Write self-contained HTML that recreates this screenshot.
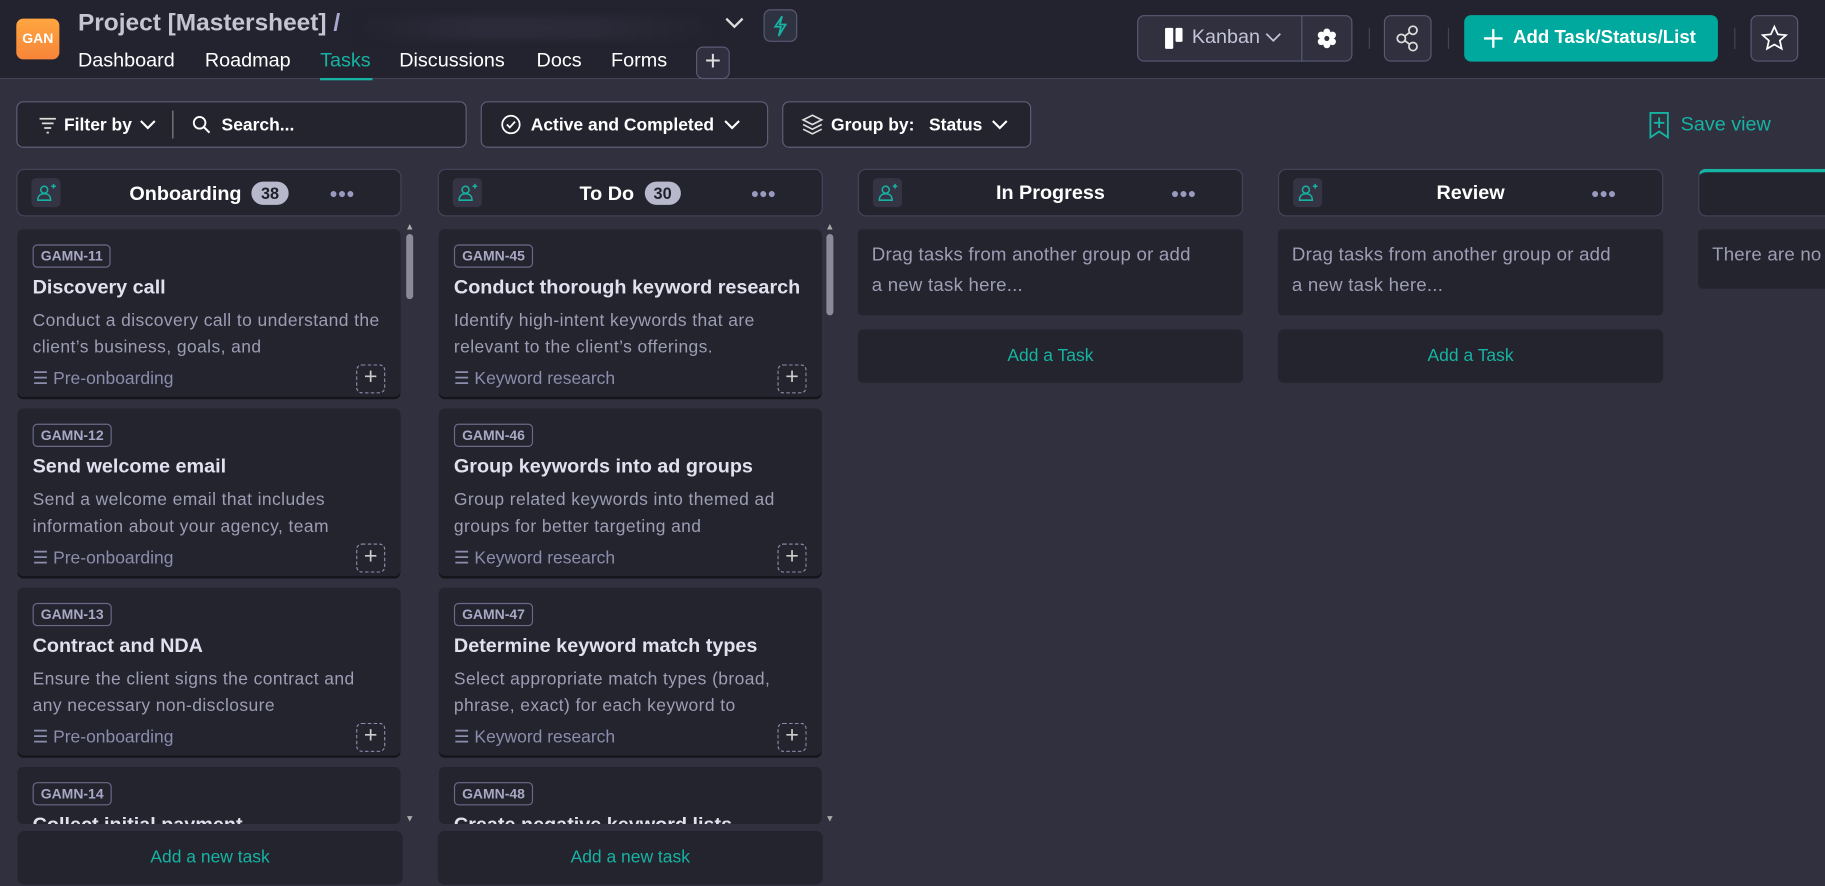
<!DOCTYPE html>
<html><head><meta charset="utf-8"><style>
*{box-sizing:border-box;margin:0;padding:0}
html,body{width:1825px;height:886px;overflow:hidden;background:#30303f}
#w{transform:scale(1.16390);transform-origin:0 0;width:1568px;height:761px;position:absolute;left:0;top:0;font-family:"Liberation Sans",sans-serif;color:#fff;background:#30303f;overflow:hidden}
.a{position:absolute}
.top{left:0;top:0;width:1568px;height:68px;background:#23232f;border-bottom:1px solid #444457}
.btn{position:absolute;border:1px solid #5a5a75;border-radius:6px;background:#2f2f40}
.tab{position:absolute;top:42px;font-size:17px;color:#fff}
.tb{position:absolute;top:87px;height:40px;border:1px solid #5e5e78;border-radius:6px;background:#24242f;font-size:15px;font-weight:bold;display:flex;align-items:center}
.col{position:absolute;top:145px;width:331px}
.hdr{height:41px;border:1px solid #45455a;border-radius:7px;background:#24242f;position:relative}
.hdr .ic{position:absolute;left:12px;top:7px;width:25px;height:25px;border-radius:4px;background:#343444}
.hdr .t{position:absolute;left:0;right:0;top:10px;text-align:center;font-size:17px;font-weight:bold}
.cnt{display:inline-block;background:#b8b8cc;color:#1f1f2a;border-radius:10px;font-size:14px;padding:2px 8px;margin-left:4px;vertical-align:1px}
.dots{position:absolute;left:268px;top:13px;color:#9a9ac0;font-size:12px;letter-spacing:0px}
.card{position:absolute;left:1px;width:329px;height:144px;background:#24242f;border-radius:5px;box-shadow:0 2px 0 #14141a}
.tag{position:absolute;left:13px;top:13px;border:1px solid #6a6a88;border-radius:4px;font-size:12px;font-weight:bold;color:#a8a8c4;padding:2px 6px}
.ti{position:absolute;left:13px;top:40px;font-size:17px;font-weight:bold;color:#e0e0ee}
.ds{position:absolute;left:13px;top:67px;width:300px;font-size:15px;letter-spacing:0.35px;line-height:23px;color:#9d9db4;height:46px;overflow:hidden}
.ft{position:absolute;left:13px;top:119px;font-size:15px;color:#8c8cac}
.pl{position:absolute;left:291px;top:116px;width:25px;height:25px;border:1px dashed #8c8cac;border-radius:5px;color:#ccc;text-align:center;font-size:20px;line-height:21px}
.add{position:absolute;top:714px;width:331px;height:46px;background:#24242f;border-radius:6px;color:#16b3a2;font-size:15px;text-align:center;line-height:46px}
.empty{position:absolute;top:52px;width:331px;height:74px;background:#24242f;border-radius:4px;color:#9d9db4;font-size:16px;line-height:26px;padding:10px 12px 0 12px;letter-spacing:0.2px}
.at{position:absolute;top:138px;width:331px;height:46px;background:#24242f;border-radius:5px;color:#16b3a2;font-size:15px;text-align:center;line-height:46px}
.sb{position:absolute;width:8px;top:190px;height:518px}
</style></head><body><div id="w">
<div class="a top"></div>
<div class="a" style="left:14px;top:16px;width:37px;height:35px;border-radius:6px;background:linear-gradient(#ffa640,#f7853a);font-size:12px;font-weight:bold;text-align:center;line-height:35px">GAN</div>
<div class="a" style="left:67px;top:8px;font-size:21px;font-weight:bold;color:#c4c4d2">Project [Mastersheet] <span style="color:#a8a8d0">/</span></div>
<div class="a" style="left:310px;top:14px;width:300px;height:20px;background:linear-gradient(90deg,#23232f,#2b2b3a,#2a2a38,#23232f);filter:blur(3px)"></div>
<svg class="a" style="left:622px;top:13px" width="18" height="14"><path d="M2 3l7 7 7-7" stroke="#ddd" stroke-width="2" fill="none"/></svg>
<div class="btn" style="left:656px;top:8px;width:29px;height:28px;background:#2f3240"><svg width="27" height="26"><path d="M15 5l-6 9h5l-2 8 6-10h-5z" stroke="#16b3a2" stroke-width="1.5" fill="none"/></svg></div>
<div class="tab" style="left:67px">Dashboard</div>
<div class="tab" style="left:176px">Roadmap</div>
<div class="tab" style="left:275px;color:#16b3a2">Tasks</div>
<div class="a" style="left:275px;top:67px;width:45px;height:2px;background:#16b3a2"></div>
<div class="tab" style="left:343px">Discussions</div>
<div class="tab" style="left:461px">Docs</div>
<div class="tab" style="left:525px">Forms</div>
<div class="btn" style="left:598px;top:40px;width:29px;height:28px;text-align:center;font-size:24px;line-height:24px;color:#ddd">+</div>

<div class="btn" style="left:977px;top:13px;width:185px;height:40px;background:#30303f"></div>
<div class="a" style="left:1118px;top:13px;width:1px;height:40px;background:#5a5a75"></div>
<div class="a" style="left:1001px;top:24px;width:7px;height:18px;background:#fff;border-radius:1px"></div>
<div class="a" style="left:1010px;top:24px;width:6px;height:12px;background:#fff;border-radius:1px"></div>
<div class="a" style="left:1024px;top:22px;font-size:17px;color:#c4c4d8">Kanban</div>
<svg class="a" style="left:1086px;top:27px" width="16" height="10"><path d="M2 2l6 6 6-6" stroke="#c4c4d8" stroke-width="1.5" fill="none"/></svg>
<svg class="a" style="left:1130px;top:23px" width="20" height="20"><g fill="#fff"><circle cx="10" cy="4.5" r="3"/><circle cx="10" cy="15.5" r="3"/><circle cx="5.2" cy="7.2" r="3"/><circle cx="14.8" cy="7.2" r="3"/><circle cx="5.2" cy="12.8" r="3"/><circle cx="14.8" cy="12.8" r="3"/><circle cx="10" cy="10" r="5"/></g><circle cx="10" cy="10" r="2.2" fill="#30303f"/></svg>
<div class="a" style="left:1176px;top:24px;width:1px;height:18px;background:#444457"></div>
<div class="btn" style="left:1189px;top:13px;width:41px;height:40px;background:#30303f"><svg width="39" height="38"><g stroke="#ddd" stroke-width="1.5" fill="none"><circle cx="14" cy="19" r="3.5"/><circle cx="24" cy="12" r="3.5"/><circle cx="24" cy="26" r="3.5"/><path d="M17 17l4-3M17 21l4 3"/></g></svg></div>
<div class="a" style="left:1244px;top:24px;width:1px;height:18px;background:#444457"></div>
<div class="a" style="left:1258px;top:13px;width:218px;height:40px;background:#00a99d;border-radius:6px;font-size:16px;font-weight:bold;line-height:40px;padding-left:42px">Add Task/Status/List</div>
<svg class="a" style="left:1274px;top:24px" width="18" height="18"><path d="M9 1v16M1 9h16" stroke="#fff" stroke-width="2"/></svg>
<div class="a" style="left:1490px;top:24px;width:1px;height:18px;background:#444457"></div>
<div class="btn" style="left:1504px;top:13px;width:41px;height:40px;background:#30303f"><svg width="39" height="38"><path d="M19.5 9l3 6.5 7 .7-5.3 4.7 1.6 7-6.3-3.7-6.3 3.7 1.6-7-5.3-4.7 7-.7z" stroke="#fff" stroke-width="1.5" fill="none"/></svg></div>

<div class="tb" style="left:14px;width:387px">
<svg style="margin-left:18px" width="16" height="16"><path d="M1 3h14M3 7h10M5 11h6M7 15h2" stroke="#ddd" stroke-width="1.5"/></svg>
<span style="margin-left:6px">Filter by</span>
<svg style="margin-left:6px" width="16" height="10"><path d="M2 2l6 6 6-6" stroke="#fff" stroke-width="1.8" fill="none"/></svg>
<span style="margin-left:13px;width:1px;height:24px;background:#888"></span>
<svg style="margin-left:16px" width="16" height="16"><circle cx="6.5" cy="6.5" r="5" stroke="#fff" stroke-width="1.6" fill="none"/><path d="M10 10l5 5" stroke="#fff" stroke-width="1.8"/></svg>
<span style="margin-left:9px">Search...</span></div>
<div class="tb" style="left:413px;width:247px">
<svg style="margin-left:16px" width="18" height="18"><circle cx="9" cy="9" r="7.5" stroke="#fff" stroke-width="1.5" fill="none"/><path d="M5.5 9l2.5 2.5 4.5-5" stroke="#fff" stroke-width="1.5" fill="none"/></svg>
<span style="margin-left:8px">Active and Completed</span>
<svg style="margin-left:7px" width="16" height="10"><path d="M2 2l6 6 6-6" stroke="#fff" stroke-width="1.8" fill="none"/></svg></div>
<div class="tb" style="left:672px;width:214px">
<svg style="margin-left:15px" width="20" height="18"><g stroke="#ddd" stroke-width="1.4" fill="none"><path d="M10 1l8 4-8 4-8-4z"/><path d="M2 9l8 4 8-4M2 13l8 4 8-4"/></g></svg>
<span style="margin-left:6px">Group by:&nbsp;&nbsp; Status</span>
<svg style="margin-left:7px" width="16" height="10"><path d="M2 2l6 6 6-6" stroke="#fff" stroke-width="1.8" fill="none"/></svg></div>
<svg class="a" style="left:1416px;top:96px" width="20" height="24"><path d="M2 1h15v21l-7.5-5-7.5 5z M9.5 5v9M5 9.5h9" stroke="#16b3a2" stroke-width="1.6" fill="none"/></svg>
<div class="a" style="left:1444px;top:97px;font-size:17px;color:#16b3a2">Save view</div>

<div class="col" style="left:14px">
<div class="hdr"><div class="ic"><svg width="25" height="25"><g stroke="#16b3a2" stroke-width="1.3" fill="none"><circle cx="11" cy="10" r="3"/><path d="M5.5 19c0-4 2.5-5.5 5.5-5.5s5.5 1.5 5.5 5.5z"/><path d="M17 7h4M19 5v4"/></g></svg></div><div class="t">Onboarding <span class="cnt">38</span></div><div class="dots">●●●</div></div>
<div class="card" style="top:52px"><div class="tag">GAMN-11</div><div class="ti">Discovery call</div><div class="ds">Conduct a discovery call to understand the client’s business, goals, and</div><div class="ft">☰ Pre-onboarding</div><div class="pl">+</div></div>
<div class="card" style="top:206px"><div class="tag">GAMN-12</div><div class="ti">Send welcome email</div><div class="ds">Send a welcome email that includes information about your agency, team</div><div class="ft">☰ Pre-onboarding</div><div class="pl">+</div></div>
<div class="card" style="top:360px"><div class="tag">GAMN-13</div><div class="ti">Contract and NDA</div><div class="ds">Ensure the client signs the contract and any necessary non-disclosure</div><div class="ft">☰ Pre-onboarding</div><div class="pl">+</div></div>
<div class="card" style="top:514px;height:49px;overflow:hidden;box-shadow:none"><div class="tag">GAMN-14</div><div class="ti">Collect initial payment</div></div>
</div>
<div class="col" style="left:376px">
<div class="hdr"><div class="ic"><svg width="25" height="25"><g stroke="#16b3a2" stroke-width="1.3" fill="none"><circle cx="11" cy="10" r="3"/><path d="M5.5 19c0-4 2.5-5.5 5.5-5.5s5.5 1.5 5.5 5.5z"/><path d="M17 7h4M19 5v4"/></g></svg></div><div class="t">To Do <span class="cnt">30</span></div><div class="dots">●●●</div></div>
<div class="card" style="top:52px"><div class="tag">GAMN-45</div><div class="ti">Conduct thorough keyword research</div><div class="ds">Identify high-intent keywords that are relevant to the client’s offerings.</div><div class="ft">☰ Keyword research</div><div class="pl">+</div></div>
<div class="card" style="top:206px"><div class="tag">GAMN-46</div><div class="ti">Group keywords into ad groups</div><div class="ds">Group related keywords into themed ad groups for better targeting and</div><div class="ft">☰ Keyword research</div><div class="pl">+</div></div>
<div class="card" style="top:360px"><div class="tag">GAMN-47</div><div class="ti">Determine keyword match types</div><div class="ds">Select appropriate match types (broad, phrase, exact) for each keyword to</div><div class="ft">☰ Keyword research</div><div class="pl">+</div></div>
<div class="card" style="top:514px;height:49px;overflow:hidden;box-shadow:none"><div class="tag">GAMN-48</div><div class="ti">Create negative keyword lists</div></div>
</div>
<div class="a" style="left:0;top:708px;width:720px;height:53px;background:#30303f"></div>
<div class="sb" style="left:348px"><div style="color:#aaa;font-size:8px;text-align:center">▲</div><div style="width:6px;margin:2px auto;height:56px;background:#8a8a98;border-radius:3px"></div><div style="position:absolute;bottom:0;width:8px;color:#aaa;font-size:8px;text-align:center">▼</div></div>
<div class="sb" style="left:709px"><div style="color:#aaa;font-size:8px;text-align:center">▲</div><div style="width:6px;margin:2px auto;height:70px;background:#8a8a98;border-radius:3px"></div><div style="position:absolute;bottom:0;width:8px;color:#aaa;font-size:8px;text-align:center">▼</div></div>
<div class="add" style="left:15px">Add a new task</div>
<div class="add" style="left:376px">Add a new task</div>

<div class="col" style="left:737px">
<div class="hdr"><div class="ic"><svg width="25" height="25"><g stroke="#16b3a2" stroke-width="1.3" fill="none"><circle cx="11" cy="10" r="3"/><path d="M5.5 19c0-4 2.5-5.5 5.5-5.5s5.5 1.5 5.5 5.5z"/><path d="M17 7h4M19 5v4"/></g></svg></div><div class="t">In Progress</div><div class="dots">●●●</div></div>
<div class="empty">Drag tasks from another group or add<br>a new task here...</div>
<div class="at">Add a Task</div></div>
<div class="col" style="left:1098px">
<div class="hdr"><div class="ic"><svg width="25" height="25"><g stroke="#16b3a2" stroke-width="1.3" fill="none"><circle cx="11" cy="10" r="3"/><path d="M5.5 19c0-4 2.5-5.5 5.5-5.5s5.5 1.5 5.5 5.5z"/><path d="M17 7h4M19 5v4"/></g></svg></div><div class="t">Review</div><div class="dots">●●●</div></div>
<div class="empty">Drag tasks from another group or add<br>a new task here...</div>
<div class="at">Add a Task</div></div>
<div class="col" style="left:1459px">
<div class="hdr" style="border-top:3px solid #16b3a2"></div>
<div class="empty" style="height:51px;white-space:nowrap;overflow:hidden">There are no tasks</div></div>
</div></body></html>
